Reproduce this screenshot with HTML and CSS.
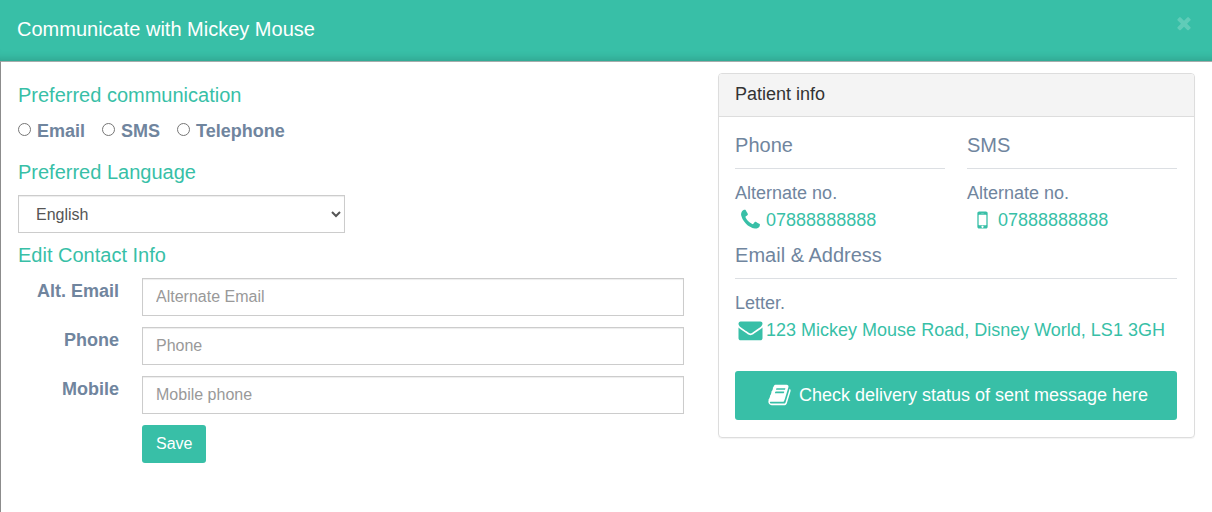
FILE: index.html
```html
<!DOCTYPE html>
<html lang="en">
<head>
<meta charset="utf-8">
<meta name="viewport" content="width=device-width, initial-scale=1">
<title>Communicate with Mickey Mouse</title>
<link rel="stylesheet" href="styles.css">
</head>
<body>
<header class="modal-header">
  <h1 class="modal-title">Communicate with Mickey Mouse</h1>
  <button class="close" type="button" aria-label="Close">
    <svg class="close-icon" viewBox="0 0 1792 1792" aria-hidden="true"><path d="M1490 1322q0 40-28 68l-136 136q-28 28-68 28t-68-28l-294-294-294 294q-28 28-68 28t-68-28l-136-136q-28-28-28-68t28-68l294-294-294-294q-28-28-28-68t28-68l136-136q28-28 68-28t68 28l294 294 294-294q28-28 68-28t68 28l136 136q28 28 28 68t-28 68l-294 294 294 294q28 28 28 68z"/></svg>
  </button>
</header>
<main class="modal-body">
  <form class="preferences">
    <h2 class="heading" id="comm">Preferred communication</h2>
    <div class="radios" role="radiogroup" aria-labelledby="comm">
      <label class="radio"><input type="radio" name="channel">Email</label>
      <label class="radio"><input type="radio" name="channel">SMS</label>
      <label class="radio"><input type="radio" name="channel">Telephone</label>
    </div>
    <h2 class="heading"><label for="language">Preferred Language</label></h2>
    <select class="control language" id="language"><option>English</option></select>
    <h2 class="heading">Edit Contact Info</h2>
    <div class="fields">
      <label class="field-label" for="email">Alt. Email</label>
      <input class="control" id="email" type="email" placeholder="Alternate Email">
      <label class="field-label" for="phone">Phone</label>
      <input class="control" id="phone" type="tel" placeholder="Phone">
      <label class="field-label" for="mobile">Mobile</label>
      <input class="control" id="mobile" type="tel" placeholder="Mobile phone">
      <button class="button save" type="button">Save</button>
    </div>
  </form>
  <aside class="panel">
    <h2 class="panel-heading">Patient info</h2>
    <div class="panel-body">
      <div class="numbers">
        <section>
          <h3 class="section-title">Phone</h3>
          <p class="line">Alternate no.</p>
          <a class="line contact" href="#"><svg class="icon" viewBox="0 0 1792 1792" aria-hidden="true"><path d="M1600 1240q0 27-10 70.5t-21 68.5q-21 50-122 106-94 51-186 51-27 0-53-3.5t-57.5-12.5-47-14.5-55.5-20.5-49-18q-98-35-175-83-127-79-264-216t-216-264q-48-77-83-175-3-9-18-49t-20.5-55.5-14.5-47-12.5-57.5-3.5-53q0-92 51-186 56-101 106-122 25-11 68.5-21t70.5-10q14 0 21 3 18 6 53 76 11 19 30 54t35 63.5 31 53.5q3 4 17.5 25t21.5 35.5 7 28.5q0 20-28.5 50t-62 55-62 53-28.5 46q0 9 5 22.5t8.5 20.5 14 24 11.5 19q76 137 174 235t235 174q2 1 19 11.5t24 14 20.5 8.5 22.5 5q18 0 46-28.5t53-62 55-62 50-28.5q14 0 28.5 7t35.5 21.5 25 17.5q25 15 53.5 31t63.5 35 54 30q70 35 76 53 3 7 3 21z"/></svg>07888888888</a>
        </section>
        <section>
          <h3 class="section-title">SMS</h3>
          <p class="line">Alternate no.</p>
          <a class="line contact" href="#"><svg class="icon" viewBox="0 0 1792 1792" aria-hidden="true"><path d="M976 1408q0-33-23.500-56.500t-56.500-23.500-56.500 23.500-23.500 56.500 23.500 56.500 56.500 23.500 56.500-23.500 23.500-56.500zm208-160v-704q0-13-9.500-22.500t-22.500-9.500h-512q-13 0-22.500 9.500t-9.500 22.500v704q0 13 9.500 22.500t22.500 9.500h512q13 0 22.500-9.500t9.500-22.500zm-192-848q0-16-16-16h-160q-16 0-16 16t16 16h160q16 0 16-16zm288-16v1024q0 52-38 90t-90 38h-512q-52 0-90-38t-38-90v-1024q0-52 38-90t90-38h512q52 0 90 38t38 90z"/></svg>07888888888</a>
        </section>
      </div>
      <section>
        <h3 class="section-title">Email &amp; Address</h3>
        <p class="line">Letter.</p>
        <a class="line contact" href="#"><svg class="icon" viewBox="0 0 1792 1792" aria-hidden="true"><path d="M1792 710v794q0 66-47 113t-113 47h-1472q-66 0-113-47t-47-113v-794q44 49 101 87 362 246 497 345 57 42 92.500 65.500t94.500 48 110 24.500h2q51 0 110-24.500t94.500-48 92.500-65.500q170-123 498-345 57-39 100-87zm0-294q0 79-49 151t-122 123q-376 261-468 325-10 7-42.500 31t-54 38.500-52 32.500-57.500 27-50 9h-2q-23 0-50-9t-57.500-27-52-32.500-54-38.500-42.500-31q-91-64-262-182.500t-205-142.500q-62-42-117-115.500t-55-136.500q0-78 41.500-130t118.500-52h1472q65 0 112.500 47t47.500 113z"/></svg>123 Mickey Mouse Road, Disney World, LS1 3GH</a>
      </section>
      <button class="button status" type="button"><svg class="icon" viewBox="0 0 1792 1792" aria-hidden="true"><path d="M1703 478q40 57 18 129l-275 906q-19 64-76.500 107.500t-122.500 43.500h-923q-77 0-148.500-53.500t-99.500-131.500q-24-67-2-127 0-4 3-27t4-37q1-8-3-21.500t-3-19.500q2-11 8-21t16.500-23.500 16.500-23.500q23-38 45-91.500t30-91.500q3-10 .5-30t-.5-28q3-11 17-28t17-23q21-36 42-92t25-90q1-9-2.500-32t.5-28q4-13 22-30.500t22-22.500q19-26 42.500-84.500t27.500-96.500q1-8-3-25.500t-2-26.500q2-8 9-18t18-23 17-21q8-12 16.500-30.500t15-35 16-36 19.500-32 26.500-23.500 36-11.500 47.500 5.500l-1 3q38-9 51-9h761q74 0 114 56t18 130l-274 906q-36 119-71.500 153.500t-128.500 34.500h-869q-27 0-38 15-11 16-1 43 24 70 144 70h923q29 0 56-15.500t35-41.500l300-987q7-22 5-57 38 15 59 43zm-1064 2q-4 13 2 22.500t20 9.500h608q13 0 25.500-9.500t16.500-22.500l21-64q4-13-2-22.500t-20-9.500h-608q-13 0-25.500 9.500t-16.500 22.500zm-83 256q-4 13 2 22.500t20 9.500h608q13 0 25.500-9.500t16.500-22.500l21-64q4-13-2-22.500t-20-9.500h-608q-13 0-25.500 9.500t-16.500 22.500z"/></svg>Check delivery status of sent message here</button>
    </div>
  </aside>
</main>
</body>
</html>
```
FILE: styles.css
```css
* { box-sizing: border-box; }

body {
  display: flex;
  flex-direction: column;
  min-height: 100vh;
  margin: 0;
  background: #fff;
  color: #70859e;
  font: 18px/26px "Liberation Sans", Arial, sans-serif;
}

h1, h2, h3, p { margin: 0; font-weight: 400; }

button, input, select { margin: 0; font-family: inherit; }

.modal-header {
  display: flex;
  justify-content: space-between;
  align-items: flex-start;
  padding: 13px 17px 16px;
  background: #38bfa7;
  box-shadow: inset 0 -10px 8px -8px rgba(0, 0, 0, 0.16);
  color: #fff;
}

.modal-title { font-size: 20px; line-height: 32px; }

.close {
  display: flex;
  padding: 0;
  border: 0;
  background: none;
  opacity: 0.2;
}

.close-icon { width: 22px; height: 20px; fill: #fff; }

.modal-body {
  display: grid;
  flex: 1;
  grid-template-columns: 81fr 58fr;
  gap: 34px;
  align-items: start;
  padding: 11px 17px;
  border-top: 1px solid #a5acab;
  border-left: 1px solid #8c8c8c;
}

.preferences { padding-top: 11px; }

.heading {
  margin-bottom: 12px;
  color: #38bfa7;
  font-size: 20px;
  line-height: 22px;
}

.radios { display: flex; gap: 17px; margin-bottom: 17px; }

.radio { display: flex; align-items: center; gap: 6px; font-weight: 700; }

.radio input { width: 13px; height: 13px; margin-bottom: 3px; }

.control {
  width: 100%;
  height: 38px;
  padding: 0 13px;
  border: 1px solid #ccc;
  border-radius: 0;
  background: #fff;
  box-shadow: inset 0 1px 1px rgba(0, 0, 0, 0.075);
  color: #555;
  font-size: 16px;
}

.control::placeholder { color: #999; opacity: 1; }

.language {
  display: block;
  width: calc(50% - 6px);
  margin-bottom: 11px;
}

.fields {
  display: grid;
  grid-template-columns: 101px 1fr;
  grid-auto-rows: minmax(38px, auto);
  gap: 11px 23px;
}

.field-label { font-weight: 700; text-align: right; }

.button {
  border: 0;
  border-radius: 3px;
  background: #38bfa7;
  color: #fff;
}

.save {
  grid-column: 2;
  justify-self: start;
  height: 38px;
  padding: 0 14px;
  font-size: 16px;
}

.panel {
  border: 1px solid #ddd;
  border-radius: 4px;
  box-shadow: 0 1px 1px rgba(0, 0, 0, 0.05);
}

.panel-heading {
  padding: 7px 16px 9px;
  border-bottom: 1px solid #ddd;
  border-radius: 3px 3px 0 0;
  background: #f4f4f4;
  color: #333;
  font-size: 18px;
}

.panel-body { padding: 17px 17px 17px 16px; }

.numbers {
  display: grid;
  grid-template-columns: 1fr 1fr;
  gap: 22px;
  margin-bottom: 10px;
}

.section-title {
  margin-bottom: 11px;
  padding-bottom: 12px;
  border-bottom: 1px solid #dcdfe3;
  font-size: 20px;
  line-height: 22px;
}

.line { line-height: 27px; }

.contact {
  display: flex;
  align-items: center;
  color: #38bfa7;
  text-decoration: none;
}

.icon {
  flex: none;
  width: 31px;
  height: 24px;
  margin-bottom: 1px;
  fill: currentColor;
}

.status {
  display: flex;
  justify-content: center;
  align-items: center;
  gap: 4px;
  width: 100%;
  height: 49px;
  margin-top: 27px;
  font-size: 18px;
}
```
